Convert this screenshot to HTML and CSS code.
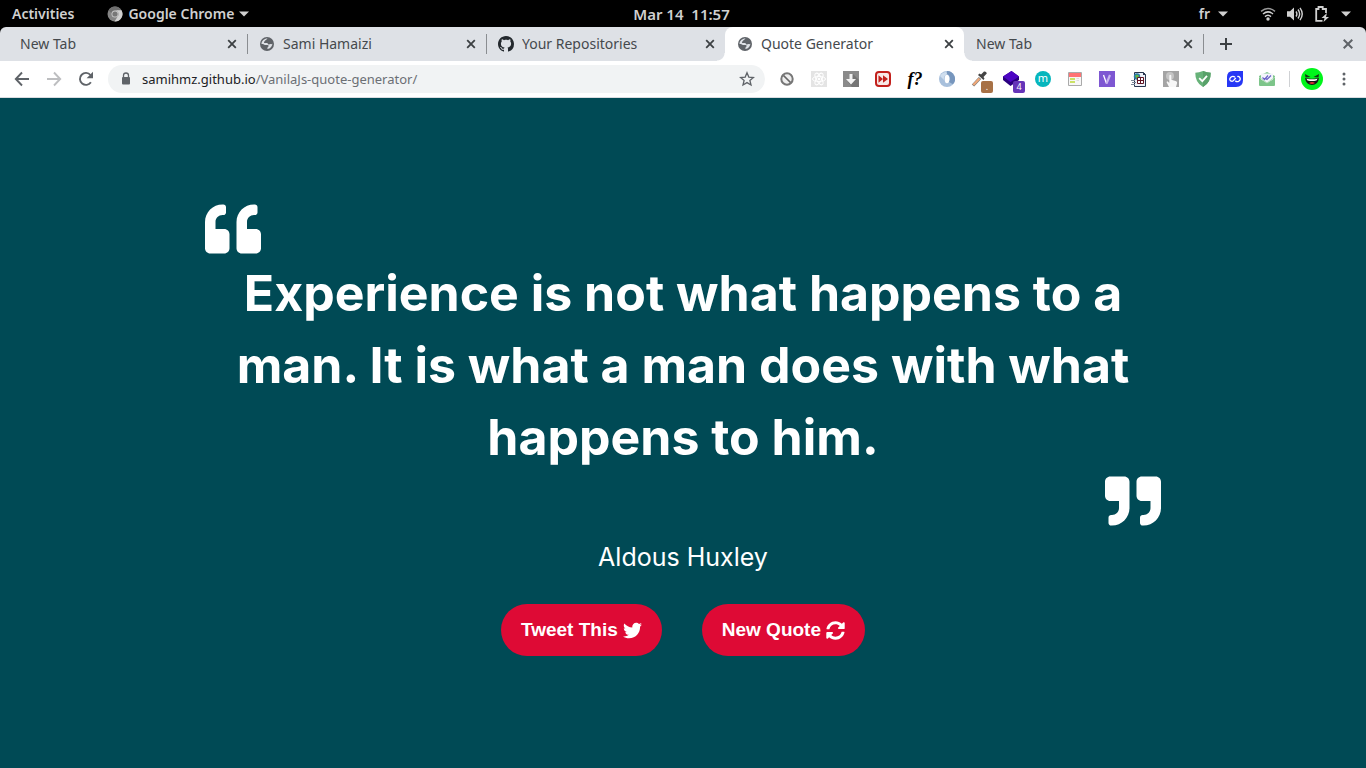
FILE: index.html
```html
<!DOCTYPE html>
<html lang="en">
<head>
<meta charset="utf-8">
<title>Quote Generator</title>
<link rel="stylesheet" href="styles.css">
</head>
<body>
<svg class="defs" aria-hidden="true">
  <symbol id="x" viewBox="0 0 16 16"><path d="M4.2 4.2l7.6 7.6M11.8 4.2l-7.6 7.6" stroke="currentColor" stroke-width="1.8" fill="none"/></symbol>
  <symbol id="caret" viewBox="0 0 10 6"><path d="M0 .5h10L5 5.5z" fill="currentColor"/></symbol>
  <symbol id="globe" viewBox="0 0 16 16"><circle cx="8" cy="8" r="7" fill="#5f6368"/><path d="M8.8 2.6c-.9.4-1.2 1.2-2 1.5-.7.3-.6 1.1-1.4 1.4-.8.4-.4 1.6.5 1.6h2.2c.8 0 .7 1.3 1.6 1.4.9 0 1.5-.6 2.3-.4.7.2 1.2-.2 1.5-.6-.1 1.3-.6 2.5-1.4 3.4-1 1.2-2.3 1.9-3.8 2.1l.3-1.5c.1-.7 1.2-.8 1.1-1.7-.1-.8-.9-.9-1.6-.9H5.900c-.8 0-1.200-1-2-1H2.500C2.500 5 5.300 2.400 8.800 2.600z" fill="#dee1e6"/></symbol>
</svg>

<header class="topbar">
  <div class="topbar-left">
    <button class="sys">Activities</button>
    <button class="sys app">
      <svg width="16" height="16" viewBox="0 0 16 16"><circle cx="8" cy="8" r="7.500" fill="#858585"/><path d="M8 .5A7.500 7.500 0 0 1 14.500 4.300H8A3.700 3.700 0 0 0 4.400 7L1.500 4.300A7.500 7.500 0 0 1 8 .5z" fill="#6e6e6e"/><path d="M8 4.300h6.500A7.500 7.500 0 0 1 7.500 15.500L11.200 9.800A3.700 3.700 0 0 0 8 4.300z" fill="#d0d0d0"/><circle cx="8" cy="8" r="3.500" fill="#c8c8c8"/><circle cx="8" cy="8" r="2.600" fill="#777"/></svg>
      Google Chrome
      <svg width="10" height="6"><use href="#caret"/></svg>
    </button>
  </div>
  <button class="sys clock">Mar 14&nbsp; 11:57</button>
  <div class="topbar-right">
    <button class="sys lang">fr <svg width="10" height="6"><use href="#caret"/></svg></button>
    <button class="sys status" aria-label="System status">
      <svg width="16" height="16" viewBox="0 0 16 16" fill="none" stroke="currentColor" stroke-width="1.500"><path d="M1 5.300Q8-.2 15 5.300" stroke="#999"/><path d="M3 8Q8 3.800 13 8M5 10.600Q8 8 11 10.600"/><circle cx="8" cy="13" r="1.700" fill="currentColor" stroke="none"/></svg>
      <svg width="16" height="16" viewBox="0 0 16 16"><path d="M0 5.300h3L7 1.500v13L3 10.700H0z" fill="currentColor"/><path d="M9 5.500q1.800 2.500 0 5M11 3.500q3.300 4.500 0 9M13 1.800q4.500 6.200 0 12.400" fill="none" stroke="currentColor" stroke-width="1.400"/></svg>
      <svg width="16" height="18" viewBox="0 0 16 18"><path d="M8.500 15.800H2.200V4h2.300V2h4.200v2H12v4" fill="none" stroke="currentColor" stroke-width="1.800"/><path d="M13 8L7.500 13h3L9.500 17l5.500-5h-3z" fill="currentColor"/></svg>
      <svg width="10" height="6"><use href="#caret"/></svg>
    </button>
  </div>
</header>

<nav class="tabs" aria-label="Tabs">
  <div class="tab"><span class="tab-title">New Tab</span><button class="close" aria-label="Close tab"><svg width="16" height="16"><use href="#x"/></svg></button></div>
  <div class="tab"><svg width="16" height="16"><use href="#globe"/></svg><span class="tab-title">Sami Hamaizi</span><button class="close" aria-label="Close tab"><svg width="16" height="16"><use href="#x"/></svg></button></div>
  <div class="tab plain"><svg width="16" height="16" viewBox="0 0 16 16"><path fill="#24292e" d="M8 0C3.580 0 0 3.580 0 8c0 3.540 2.290 6.530 5.470 7.590.4.070.550-.170.550-.380 0-.190-.010-.820-.010-1.490-2.010.370-2.530-.490-2.690-.940-.090-.230-.480-.940-.820-1.130-.280-.150-.680-.520-.010-.530.630-.010 1.080.580 1.230.820.720 1.210 1.870.870 2.330.660.070-.520.280-.870.510-1.070-1.780-.2-3.640-.890-3.640-3.950 0-.870.310-1.590.820-2.150-.080-.2-.360-1.020.080-2.120 0 0 .670-.210 2.200.820.640-.180 1.320-.270 2-.270.680 0 1.360.090 2 .270 1.530-1.040 2.200-.820 2.200-.820.440 1.100.160 1.920.080 2.120.510.560.820 1.270.820 2.150 0 3.070-1.870 3.750-3.650 3.950.290.250.540.730.540 1.480 0 1.070-.010 1.930-.010 2.200 0 .210.150.460.550.380A8.013 8.013 0 0 0 16 8c0-4.420-3.580-8-8-8z"/></svg><span class="tab-title">Your Repositories</span><button class="close" aria-label="Close tab"><svg width="16" height="16"><use href="#x"/></svg></button></div>
  <div class="tab active"><svg width="16" height="16"><use href="#globe"/></svg><span class="tab-title">Quote Generator</span><button class="close" aria-label="Close tab"><svg width="16" height="16"><use href="#x"/></svg></button></div>
  <div class="tab"><span class="tab-title">New Tab</span><button class="close" aria-label="Close tab"><svg width="16" height="16"><use href="#x"/></svg></button></div>
  <button class="new-tab" aria-label="New tab"><svg width="16" height="16" viewBox="0 0 16 16"><path d="M8 2v12M2 8h12" stroke="#3c4043" stroke-width="2"/></svg></button>
  <button class="close window-close" aria-label="Close window"><svg width="18" height="18"><use href="#x"/></svg></button>
</nav>

<div class="toolbar">
  <div class="slots">
    <button class="slot" aria-label="Back"><svg width="16" height="16" viewBox="0 0 16 16"><path d="M15 8H2M8 1.500L1.800 8 8 14.500" fill="none" stroke="#5f6368" stroke-width="1.900"/></svg></button>
    <button class="slot" aria-label="Forward"><svg width="16" height="16" viewBox="0 0 16 16"><path d="M1 8h13M8 1.500L14.200 8 8 14.500" fill="none" stroke="#bdbec0" stroke-width="1.900"/></svg></button>
    <button class="slot" aria-label="Reload"><svg width="16" height="16" viewBox="0 0 16 16"><path d="M12.900 11.300A6 6 0 1 1 12.500 4" fill="none" stroke="#5f6368" stroke-width="1.900"/><path d="M15 .8v6.400H8.600z" fill="#5f6368"/></svg></button>
  </div>
  <div class="omnibox">
    <svg width="10" height="14" viewBox="0 0 10 14"><path d="M2.500 6V3.500a2.500 2.500 0 0 1 5 0V6" fill="none" stroke="#5f6368" stroke-width="1.300"/><rect x="1" y="5" width="8" height="7.500" rx="1" fill="#5f6368"/></svg>
    <a class="url" href="#">samihmz.github.io<span>/VanilaJs-quote-generator/</span></a>
    <button class="star" aria-label="Bookmark"><svg width="16" height="16" viewBox="0 0 16 16"><path d="M8 1.800l1.800 4.300 4.600.4-3.500 3 1.100 4.500L8 11.600 4 14l1.100-4.500-3.500-3 4.600-.4z" fill="none" stroke="#5f6368" stroke-width="1.300"/></svg></button>
  </div>
  <div class="slots">
    <button class="slot" aria-label="Blocker"><svg width="16" height="16" viewBox="0 0 16 16"><circle cx="8" cy="8" r="5.700" fill="#eee" stroke="#777" stroke-width="2"/><path d="M4.500 4.500l7 7" stroke="#666" stroke-width="1.700"/></svg></button>
    <button class="slot" aria-label="React tools"><svg width="16" height="16" viewBox="0 0 16 16"><path d="M0 0h16v16H0z" fill="#e4e4e4"/><g fill="none" stroke="#fff"><ellipse cx="8" cy="8" rx="6.500" ry="2.600"/><ellipse cx="8" cy="8" rx="6.500" ry="2.600" transform="rotate(60 8 8)"/><ellipse cx="8" cy="8" rx="6.500" ry="2.600" transform="rotate(120 8 8)"/></g><circle cx="8" cy="8" r="1.300" fill="#fff"/></svg></button>
    <button class="slot" aria-label="Downloader"><svg width="16" height="16" viewBox="0 0 16 16"><path d="M0 0h16v16H0z" fill="#8a8a8a"/><path d="M10 3l6 6v7H9l-4-5z" fill="#747474"/><path d="M6.500 3h3v5H13l-5 5.500L3 8h3.500z" fill="#f2f2f2"/></svg></button>
    <button class="slot" aria-label="Fast forward"><svg width="16" height="16" viewBox="0 0 16 16"><rect x="1" y="1" width="14" height="14" rx="3" fill="#f8e9e7" stroke="#c2201c" stroke-width="2"/><path d="M3.500 4.200L8 8l-4.500 3.800zM8 4.200L13 8l-5 3.800z" fill="#c2201c"/></svg></button>
    <button class="slot font-finder" aria-label="Font finder">f?</button>
    <button class="slot" aria-label="Ring"><svg width="16" height="16" viewBox="0 0 16 16"><circle cx="8" cy="8" r="8" fill="#a8c0dc"/><path d="M8 0a8 8 0 0 1 6 13.300L10 11q3-4-2-8z" fill="#7796bd"/><path d="M1 5a8 8 0 0 1 6-4l1 2Q4 5 5 9z" fill="#cfdeee"/><ellipse cx="8" cy="8" rx="2.300" ry="4.200" fill="#fff"/></svg></button>
    <button class="slot" aria-label="Color picker"><svg width="16" height="16" viewBox="0 0 16 16"><path d="M2 14.500L9 7" stroke="#777" stroke-width="3.200"/><path d="M2.300 14L8.500 7.500" stroke="#f0a878" stroke-width="2.200"/><path d="M7 4l5.500 5 1-1.500-1-1.500L15.800 2.500Q15.500.2 13 .5L10 3.600 8.500 2.600z" fill="#444"/></svg><span class="badge brown">.</span></button>
    <button class="slot" aria-label="Layers"><svg width="16" height="16" viewBox="0 0 16 16"><path d="M0 5.500L8.500 0 16 5.500V9l-8.500 6L0 9z" fill="#29007f"/><path d="M0 5.500L8.500 0 16 5.500 7.500 11z" fill="#4d05c4"/></svg><span class="badge purple">4</span></button>
    <button class="slot" aria-label="M extension"><span class="round">m</span></button>
    <button class="slot" aria-label="Page form"><svg width="16" height="16" viewBox="0 0 16 16"><path d="M1.500 1.500h13v13h-13z" fill="#f7f7f7" stroke="#aaa"/><path d="M2 2h12v4H2z" fill="#ff7474"/><path d="M3 8h5M3 11h5" stroke="#bddb36" stroke-width="1.500"/><path d="M9.500 7.500H12M9.500 9.500H12" stroke="#ddd"/></svg></button>
    <button class="slot" aria-label="V extension"><svg width="16" height="16" viewBox="0 0 16 16"><path d="M0 0h16v16H0z" fill="#7e57d2"/><path d="M4.500 4L7.500 12.500" stroke="#fff" stroke-width="1.300"/><path d="M7.500 12.500L11 4" stroke="#c8b4ee" stroke-width="2.200"/></svg></button>
    <button class="slot" aria-label="Web tables"><svg width="16" height="16" viewBox="0 0 16 16"><path d="M3.500 1.500h9l2 2v12h-11z" fill="#eef1f8" stroke="#27364f"/><path d="M12 1l3 3h-3z" fill="#27364f"/><circle cx="6" cy="5.500" r="3.200" fill="#2a78a8"/><path d="M4 5q2-2.500 4 0L6 8z" fill="#65b944"/><path d="M6.500 6.500h6v6h-6z" fill="#fff" stroke="#611525"/><path d="M9.500 6.500v6M6.500 9.500h6" stroke="#611525"/><path d="M0 9.500h4M1 11.500h4M0 13.500h4" stroke="#7b8797"/></svg></button>
    <button class="slot" aria-label="Pointer"><svg width="16" height="16" viewBox="0 0 16 16"><path d="M0 0h16v16H0z" fill="#a4a4a4"/><circle cx="7" cy="5" r="4" fill="#c5c5c5"/><path d="M6 16l-2.500-5 1-.8L6.300 12V4.500q1-1.400 2 0v4.300l5 1.400q1.200.7.700 2.300l-1 3.500z" fill="#f7f7f7"/></svg></button>
    <button class="slot" aria-label="Shield"><svg width="16" height="16" viewBox="0 0 16 16"><path d="M8 0q4 1.500 7.700 1.700Q16 11.500 8 16 0 11.500.3 1.700 4 1.500 8 0z" fill="#67b279"/><path d="M8 0q4 1.500 7.700 1.700Q16 11.500 8 16z" fill="#58a169"/><path d="M4.200 7.200L7.300 10.200 12 4.800" fill="none" stroke="#fff" stroke-width="1.800"/></svg></button>
    <button class="slot" aria-label="Infinity"><svg width="16" height="16" viewBox="0 0 16 16"><path d="M6 0h10v9q0 7-7 7H0V6q0-6 6-6z" fill="#2637f5"/><path d="M8 6.300Q6 4.500 3.800 6.200 1.800 8.200 3.600 9.900 5.700 11 7 9L8.800 6.800M8.300 9.700Q10 11.500 12 9.900 14.200 8 12.600 6.200 11.500 5 10.300 5.600" fill="none" stroke="#fff" stroke-width="1.300"/></svg></button>
    <button class="slot" aria-label="Mail tracker"><svg width="16" height="16" viewBox="0 0 16 16"><path d="M0 5l8-4 8 4v9q0 1-1 1H1q-1 0-1-1z" fill="#7dc58a"/><path d="M2 2.500h12v6L8 12 2 8.500z" fill="#f3f4fb"/><path d="M0 6l8 6 8-6" fill="none" stroke="#b3ddb9"/><path d="M3.500 6.500l2 2 3.500-4M7 7.700l1 .8 4-4" fill="none" stroke="#6a61c8" stroke-width="1.200"/></svg></button>
  </div>
  <span class="divider"></span>
  <button class="avatar" aria-label="Profile"><svg width="22" height="22" viewBox="0 0 22 22"><circle cx="11" cy="11" r="11" fill="#00f51b"/><path d="M4 6l5.500 3-5 .5zM18 6l-5.500 3 5 .5z" fill="#163015"/><path d="M4 10q7 1.500 14 0-1 7-7 7t-7-7z" fill="#161616"/><path d="M5.500 10.800q5.500 1 11 0l-1 1.600q-4.500 1-9 0z" fill="#fff"/><path d="M8 15q3-1.800 6 0-3 2-6 0z" fill="#e03434"/></svg></button>
  <button class="slot" aria-label="Menu"><svg width="4" height="16" viewBox="0 0 4 16" fill="#5f6368"><circle cx="2" cy="3" r="1.500"/><circle cx="2" cy="8" r="1.500"/><circle cx="2" cy="13" r="1.500"/></svg></button>
</div>

<main class="page">
  <section class="quote-container">
    <svg class="mark" viewBox="0 0 512 512"><path d="M464 256h-80v-64c0-35.300 28.700-64 64-64h8c13.300 0 24-10.700 24-24V56c0-13.300-10.700-24-24-24h-8c-88.400 0-160 71.600-160 160v240c0 26.500 21.500 48 48 48h128c26.500 0 48-21.500 48-48V304c0-26.500-21.500-48-48-48zm-288 0H96v-64c0-35.300 28.700-64 64-64h8c13.300 0 24-10.700 24-24V56c0-13.300-10.700-24-24-24h-8C71.600 32 0 103.600 0 192v240c0 26.500 21.500 48 48 48h128c26.500 0 48-21.500 48-48V304c0-26.500-21.500-48-48-48z"/></svg>
    <h1 class="quote">Experience is not what happens to a man. It is what a man does with what happens to him.</h1>
    <svg class="mark end" viewBox="0 0 512 512"><path d="M464 32H336c-26.500 0-48 21.500-48 48v128c0 26.500 21.500 48 48 48h80v64c0 35.300-28.700 64-64 64h-8c-13.300 0-24 10.700-24 24v48c0 13.300 10.700 24 24 24h8c88.400 0 160-71.600 160-160V80c0-26.500-21.500-48-48-48zm-288 0H48C21.500 32 0 53.500 0 80v128c0 26.500 21.500 48 48 48h80v64c0 35.300-28.700 64-64 64h-8c-13.300 0-24 10.700-24 24v48c0 13.300 10.700 24 24 24h8c88.400 0 160-71.600 160-160V80c0-26.500-21.500-48-48-48z"/></svg>
    <p class="author">Aldous Huxley</p>
    <div class="actions">
      <button class="pill">Tweet This <svg viewBox="0 0 512 512"><path d="M459.370 151.716c.325 4.548.325 9.097.325 13.645 0 138.720-105.583 298.558-298.558 298.558-59.452 0-114.680-17.219-161.137-47.106 8.447.974 16.568 1.299 25.340 1.299 49.055 0 94.213-16.568 130.274-44.832-46.132-.975-84.792-31.188-98.112-72.772 6.498.974 12.995 1.624 19.818 1.624 9.421 0 18.843-1.300 27.614-3.573-48.081-9.747-84.143-51.980-84.143-102.985v-1.299c13.969 7.797 30.214 12.670 47.431 13.319-28.264-18.843-46.781-51.005-46.781-87.391 0-19.492 5.197-37.360 14.294-52.954 51.655 63.675 129.300 105.258 216.365 109.807-1.624-7.797-2.599-15.918-2.599-24.040 0-57.828 46.782-104.934 104.934-104.934 30.213 0 57.502 12.670 76.670 33.137 23.715-4.548 46.456-13.320 66.599-25.340-7.798 24.366-24.366 44.833-46.132 57.827 21.117-2.273 41.584-8.122 60.426-16.243-14.292 20.791-32.161 39.308-52.628 54.253z"/></svg></button>
      <button class="pill">New Quote <svg viewBox="0 0 512 512"><path d="M370.720 133.280C339.458 104.008 298.888 87.962 255.848 88c-77.458.068-144.328 53.178-162.791 126.850-1.344 5.363-6.122 9.150-11.651 9.150H24.103c-7.498 0-13.194-6.807-11.807-14.176C33.933 94.924 134.813 8 256 8c66.448 0 126.791 26.136 171.315 68.685L463.030 40.970C478.149 25.851 504 36.559 504 57.941V192c0 13.255-10.745 24-24 24H345.941c-21.382 0-32.090-25.851-16.971-40.971l41.750-41.749zM32 296h134.059c21.382 0 32.090 25.851 16.971 40.971l-41.750 41.750c31.262 29.273 71.835 45.319 114.876 45.280 77.418-.070 144.315-53.144 162.787-126.849 1.344-5.363 6.122-9.150 11.651-9.150h57.304c7.498 0 13.194 6.807 11.807 14.176C478.067 417.076 377.187 504 256 504c-66.448 0-126.791-26.136-171.315-68.685L48.970 471.030C33.851 486.149 8 475.441 8 454.059V320c0-13.255 10.745-24 24-24z"/></svg></button>
    </div>
  </section>
</main>
</body>
</html>
```
FILE: styles.css
```css
* { box-sizing: border-box; }

body {
  margin: 0;
  min-height: 100vh;
  display: flex;
  flex-direction: column;
  background: #000;
  font-family: "Noto Sans", "Open Sans", sans-serif;
}

button {
  margin: 0;
  padding: 0;
  border: 0;
  background: none;
  color: inherit;
  font: inherit;
  cursor: pointer;
}

svg { display: block; flex: none; }

.defs { position: absolute; width: 0; height: 0; }

/* Desktop bar */
.topbar {
  display: grid;
  grid-template-columns: 1fr auto 1fr;
  align-items: center;
  height: 27px;
  padding: 0 15px 0 12px;
  color: #d0d0d0;
  font-size: 14px;
  font-weight: 600;
}

.topbar-left { display: flex; gap: 33px; }
.topbar-right { display: flex; justify-content: flex-end; gap: 32px; }
.sys { display: flex; align-items: center; gap: 6px; white-space: nowrap; }
.app { gap: 5px; }
.clock { font-size: 15px; }
.lang { gap: 8px; }
.status { gap: 11px; }

/* Tab strip */
.tabs {
  display: flex;
  align-items: center;
  height: 34px;
  padding: 0 9px 0 8px;
  border-radius: 6px 6px 0 0;
  background: #dee1e6;
  color: #45494d;
}

.tab {
  position: relative;
  display: flex;
  align-items: center;
  flex: 0 1 239px;
  min-width: 0;
  height: 34px;
  padding: 0 7px 0 12px;
  gap: 8px;
  font-size: 14px;
}

.tab::after {
  content: "";
  position: absolute;
  right: -1px;
  top: 7px;
  width: 1px;
  height: 20px;
  background: #8a8d91;
}

.tab.plain::after { display: none; }

.tab-title {
  flex: 1;
  padding-bottom: 2px;
  overflow: hidden;
  white-space: nowrap;
}

.tab.active {
  z-index: 1;
  border-radius: 8px 8px 0 0;
  background: #fff;
}

.tab.active::before,
.tab.active::after {
  content: "";
  position: absolute;
  top: auto;
  bottom: 0;
  width: 8px;
  height: 8px;
}

.tab.active::before {
  left: -8px;
  background: radial-gradient(circle at 0 0, #dee1e6 7px, #fff 8px);
}

.tab.active::after {
  right: -8px;
  background: radial-gradient(circle at 100% 0, #dee1e6 7px, #fff 8px);
}

.close { color: #3c4043; }
.new-tab { margin-left: 15px; }
.window-close { margin-left: auto; color: #5f6368; }

/* Toolbar */
.toolbar {
  display: flex;
  align-items: center;
  height: 37px;
  padding: 0 6px;
  border-bottom: 1px solid #dadce0;
  background: #fff;
}

.slots { display: flex; flex: none; }

.slot {
  position: relative;
  display: flex;
  align-items: center;
  justify-content: center;
  width: 32px;
  height: 28px;
}

.omnibox {
  display: flex;
  align-items: center;
  flex: 1;
  min-width: 0;
  height: 28px;
  margin: 0 6px;
  padding: 0 10px 0 13px;
  border-radius: 14px;
  background: #f1f3f4;
  font-size: 13px;
}

.url {
  flex: 1;
  margin-left: 11px;
  overflow: hidden;
  color: #202124;
  text-decoration: none;
  white-space: nowrap;
}

.url span { color: #6b6f74; }

.font-finder {
  color: #000;
  font: italic bold 18px "Liberation Serif", serif;
}

.badge {
  position: absolute;
  right: 2px;
  bottom: 0;
  width: 12px;
  height: 12px;
  border-radius: 2px;
  color: #fff;
  font-size: 9px;
  line-height: 12px;
  text-align: center;
}

.brown { background: #a77146; }
.purple { background: #6534b8; }

.round {
  width: 16px;
  height: 16px;
  border-radius: 50%;
  background: #06b6bd;
  color: #fff;
  font-size: 11px;
  line-height: 14px;
  text-align: center;
}

.divider { width: 1px; height: 16px; margin: 0 11px 0 6px; background: #cfd1d4; }
.avatar { margin-right: 5px; }

/* Quote page */
.page {
  display: flex;
  flex: 1;
  align-items: center;
  justify-content: center;
  padding: 8px 24px 17px;
  background: #004a55;
  color: #fff;
}

.quote-container {
  display: flex;
  flex-direction: column;
  width: 100%;
  max-width: 956px;
}

.mark { width: 56px; height: 56px; fill: currentColor; }
.mark.end { align-self: flex-end; }

.quote {
  margin: 0;
  font: 700 50px/72px Inter, sans-serif;
  text-align: center;
}

.author {
  margin: 8px 0 27px;
  font: 25px/40px Inter, sans-serif;
  text-align: center;
}

.actions { display: flex; justify-content: center; gap: 40px; }

.pill {
  display: flex;
  align-items: center;
  gap: 5px;
  height: 52px;
  padding: 0 20px;
  border-radius: 26px;
  background: #de0a35;
  font: bold 19px "Liberation Sans", Arial, sans-serif;
  white-space: nowrap;
}

.pill svg { width: 19px; height: 19px; fill: currentColor; }
```
